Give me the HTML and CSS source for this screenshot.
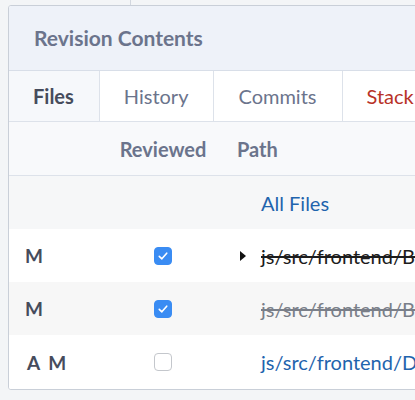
FILE: index.html
```html
<!DOCTYPE html>
<html>
<head>
<meta charset="utf-8">
<link rel="stylesheet" href="styles.css">
</head>
<body>
<div class="topline"></div>
<div class="panel">
  <div class="panel-head">Revision Contents</div>
  <div class="tabs">
    <div class="tab active">Files</div>
    <div class="tab">History</div>
    <div class="tab">Commits</div>
    <div class="tab stack">Stack</div>
  </div>
  <div class="row thead">
    <div class="c-status"></div>
    <div class="c-rev">Reviewed</div>
    <div class="c-path">Path</div>
  </div>
  <div class="row allfiles">
    <div class="c-status"></div>
    <div class="c-rev"></div>
    <div class="c-path"><span class="tri"></span><span class="link">All Files</span></div>
  </div>
  <div class="row">
    <div class="c-status">M</div>
    <div class="c-rev"><span class="cb checked"><svg viewBox="0 0 18 18" width="18" height="18"><path d="M4.8 9.4 L7.7 12.2 L13.2 5.8" fill="none" stroke="#fff" stroke-width="1.8" stroke-linecap="round" stroke-linejoin="round"/></svg></span></div>
    <div class="c-path"><span class="tri"><svg viewBox="0 0 6 10" width="6" height="10"><path d="M0 0 L6 5 L0 10 Z" fill="#111"/></svg></span><span class="strike dark">js/src/frontend/BytecodeEmitter.cpp</span></div>
  </div>
  <div class="row alt">
    <div class="c-status">M</div>
    <div class="c-rev"><span class="cb checked"><svg viewBox="0 0 18 18" width="18" height="18"><path d="M4.8 9.4 L7.7 12.2 L13.2 5.8" fill="none" stroke="#fff" stroke-width="1.8" stroke-linecap="round" stroke-linejoin="round"/></svg></span></div>
    <div class="c-path"><span class="tri"></span><span class="strike grey">js/src/frontend/BytecodeEmitter.h</span></div>
  </div>
  <div class="row last">
    <div class="c-status am">A M</div>
    <div class="c-rev"><span class="cb"></span></div>
    <div class="c-path"><span class="tri"></span><span class="link">js/src/frontend/DoWhileEmitter.cpp</span></div>
  </div>
</div>
</body>
</html>
```
FILE: styles.css
```css
html, body {
  margin: 0;
  padding: 0;
  background: #f3f5f7;
  font-family: Lato, "Open Sans", sans-serif;
  overflow: hidden;
}
body {
  width: 415px;
  height: 400px;
}
.topline {
  height: 5px;
  width: 122px;
  border-right: 1px solid #d2d7df;
  margin-left: 8px;
}
.panel {
  margin-left: 8px;
  width: 560px;
  border: 1px solid #c9cfd8;
  border-radius: 3px;
  background: #fff;
  overflow: hidden;
}
.panel-head {
  height: 64px;
  background: #eef2f9;
  border-bottom: 1px solid #d8dee8;
  color: #6b748c;
  font-weight: 700;
  font-size: 21px;
  line-height: 64px;
  padding-left: 25px;
}
.tabs {
  display: flex;
  height: 50px;
  border-bottom: 1px solid #dde2ea;
}
.tab {
  flex: none;
  padding: 0 25px 0 24px;
  font-size: 20px;
  line-height: 50px;
  color: #6b748c;
  border-right: 1px solid #dde2ea;
  background: #fff;
}
.tab.active {
  background: #f6f8fb;
  color: #464c5c;
  font-weight: 700;
}
.tab.stack {
  color: #b83227;
  border-right: none;
}
.row {
  display: flex;
  height: 53px;
  align-items: center;
  background: #fff;
}
.row.thead {
  background: #f8f9fb;
  border-bottom: 1px solid #dde2ea;
  color: #6b748c;
  font-weight: 700;
  font-size: 20px;
}
.row.allfiles {
  background: #f6f7f8;
}
.row.alt {
  background: #f7f7f7;
}
.row.last {
  height: 54px;
}
.c-status {
  flex: none;
  width: 95px;
  padding-left: 16px;
  box-sizing: border-box;
  font-weight: 700;
  font-size: 19px;
  color: #464c5c;
}
.c-status.am {
  padding-left: 18px;
  word-spacing: 4px;
}
.c-rev {
  flex: none;
  width: 118px;
  display: flex;
  justify-content: center;
}
.c-path {
  flex: none;
  display: flex;
  align-items: center;
  padding-left: 15px;
  font-size: 20px;
  white-space: nowrap;
}
.tri {
  flex: none;
  width: 24px;
  padding-left: 3px;
  box-sizing: border-box;
  display: inline-flex;
  align-items: center;
}
.link {
  color: #1f64ad;
}
.strike {
  text-decoration: line-through;
}
.dark {
  color: #1c1c1c;
}
.grey {
  color: #7a7f89;
}
.cb {
  width: 18px;
  height: 18px;
  border-radius: 4px;
  border: 1px solid #c4c7cc;
  background: #fff;
  display: inline-flex;
  align-items: center;
  justify-content: center;
  box-sizing: border-box;
}
.cb.checked {
  background: #3a8cf3;
  border-color: #3a8cf3;
}
.cb svg {
  display: block;
}
```
